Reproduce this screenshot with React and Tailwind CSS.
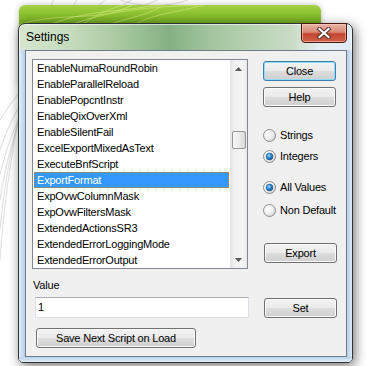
import React from "react";

const items = [
  "EnableNumaRoundRobin",
  "EnableParallelReload",
  "EnablePopcntInstr",
  "EnableQixOverXml",
  "EnableSilentFail",
  "ExcelExportMixedAsText",
  "ExecuteBnfScript",
  "ExportFormat",
  "ExpOvwColumnMask",
  "ExpOvwFiltersMask",
  "ExtendedActionsSR3",
  "ExtendedErrorLoggingMode",
  "ExtendedErrorOutput",
];

const Button = ({ children, className = "", isDefault }) => (
  <button
    className={
      "flex items-center justify-center rounded-[3px] border text-black bg-[linear-gradient(180deg,#f2f2f2_0%,#ebebeb_50%,#dddddd_51%,#cfcfcf_100%)] " +
      (isDefault
        ? "border-[#3c7fb1] shadow-[inset_0_0_0_1px_#8fdcf8] "
        : "border-[#707070] shadow-[inset_0_0_0_1px_#fbfbfb] ") +
      className
    }
  >
    {children}
  </button>
);

const Radio = ({ checked, label, className = "" }) => (
  <div className={"flex h-4 items-center " + className}>
    <svg width="13" height="13" viewBox="0 0 13 13" className="shrink-0">
      <defs>
        <radialGradient id="radioBg" cx="0.35" cy="0.35" r="0.75">
          <stop offset="0" stopColor="#ffffff" />
          <stop offset="0.6" stopColor="#ececec" />
          <stop offset="1" stopColor="#c9c9c9" />
        </radialGradient>
        <radialGradient id="radioDot" cx="0.4" cy="0.35" r="0.7">
          <stop offset="0" stopColor="#9fd8ff" />
          <stop offset="0.5" stopColor="#2d8ad1" />
          <stop offset="1" stopColor="#0b4c84" />
        </radialGradient>
      </defs>
      <circle cx="6.5" cy="6.5" r="6" fill="url(#radioBg)" stroke="#8e8f8f" />
      {checked && (
        <circle cx="6.5" cy="6.5" r="3.4" fill="url(#radioDot)" stroke="#1c5a8e" strokeWidth="0.6" />
      )}
    </svg>
    <span className="ml-[4px] leading-none">{label}</span>
  </div>
);

const Arrow = ({ down }) => (
  <svg width="7" height="4" viewBox="0 0 7 4">
    <path d={down ? "M0 0h7L3.5 4z" : "M0 4h7L3.5 0z"} fill="#5a5a5a" />
  </svg>
);

export default function App() {
  return (
    <div
      className="relative h-[366px] w-[383px] overflow-hidden bg-white text-[11px] tracking-[-0.2px] text-black"
      style={{ fontFamily: '"Liberation Sans", Arial, sans-serif' }}
    >
      {/* desktop wallpaper swirls */}
      <svg className="absolute left-0 top-0" width="383" height="366" viewBox="0 0 383 366">
        <g fill="none" stroke="#d4d4d4" strokeWidth="0.8">
          <path d="M0 150 C20 90 60 40 140 -5" />
          <path d="M0 175 C15 110 50 50 110 -5" />
          <path d="M0 200 C10 130 40 60 80 -5" />
          <path d="M0 230 C6 160 25 80 55 -5" />
          <path d="M0 120 C30 70 80 30 170 -5" />
          <path d="M120 0 C150 10 180 5 200 -5" />
          <path d="M0 260 C4 200 15 120 35 50" />
        </g>
      </svg>

      {/* green window behind */}
      <div className="absolute left-[19px] top-[5px] h-[80px] w-[302px] overflow-hidden rounded-t-[6px] bg-[linear-gradient(180deg,#a4d148_0px,#8cc230_9px,#6ea61f_20px,#6aa21d_80px)] shadow-[0_0_6px_rgba(0,0,0,0.25)]">
        <svg width="302" height="80" viewBox="0 0 302 80">
          <g fill="none" stroke="#e6f28c" strokeOpacity="0.6" strokeWidth="0.8">
            <path d="M10 30 C60 0 110 10 160 -5" />
            <path d="M30 30 C70 8 120 2 180 0" />
            <path d="M50 30 C80 5 100 -2 140 -5" />
            <path d="M70 30 C100 10 130 15 150 -5" />
            <path d="M0 20 C40 5 90 20 120 -5" />
            <path d="M100 30 C130 5 160 10 200 -5" />
          </g>
        </svg>
      </div>

      {/* Settings dialog */}
      <div className="absolute left-[18px] top-[23px] flex h-[340px] w-[335px] flex-col rounded-t-[7px] rounded-b-[5px] border border-[#2e3438] bg-[linear-gradient(90deg,#d6e6cf_0%,#c6dcbe_15%,#a9c9a1_30%,#84b184_45%,#a3c59f_58%,#b4d0af_68%,#c9dcc6_82%,#e6eff3_90%,#dfeaf5_100%)] shadow-[2px_3px_12px_rgba(0,0,0,0.55),inset_0_0_0_1px_rgba(255,255,255,0.6)]">
        {/* close button */}
        <div className="absolute right-[5px] top-[-1px] flex h-[20px] w-[46px] items-center justify-center rounded-b-[4px] border border-[#4a1a12] bg-[linear-gradient(180deg,#eab3a5_0%,#d98a78_45%,#c4442e_55%,#d0634a_100%)] shadow-[inset_0_0_0_1px_rgba(255,210,200,0.55)]">
          <svg width="14" height="12" viewBox="0 0 14 12">
            <path d="M2.5 2 L11.5 10 M11.5 2 L2.5 10" stroke="#4a2a26" strokeWidth="4" strokeLinecap="square" />
            <path d="M2.5 2 L11.5 10 M11.5 2 L2.5 10" stroke="#ffffff" strokeWidth="2.2" strokeLinecap="square" />
          </svg>
        </div>

        {/* title bar */}
        <div className="flex h-[26px] shrink-0 items-center pl-[7px] text-[12px] tracking-normal text-black">
          Settings
        </div>

        <div className="flex min-h-0 flex-1 bg-[linear-gradient(180deg,#c7dcef,#b9d3ec)]">
          <div className="w-[6px] shrink-0 bg-[linear-gradient(90deg,#e4eef8,#b4cfea)]" />

          {/* client area */}
          <div className="flex w-[322px] shrink-0 flex-col border border-[#6f7d8b] bg-[#f0f0f0] pl-[6px] pt-[8px]">
            <div className="flex">
              {/* list box */}
              <div className="flex h-[210px] w-[216px] shrink-0 border border-[#828790] bg-white">
                <div className="flex-1 overflow-hidden p-[1px] pt-0">
                  {items.map((it) => (
                    <div
                      key={it}
                      className={
                        "flex h-4 items-center pl-[2px] leading-none " +
                        (it === "ExportFormat"
                          ? "border border-dotted border-[#e07a1f] bg-[#3399ff] text-white"
                          : "border border-transparent")
                      }
                    >
                      {it}
                    </div>
                  ))}
                </div>
                {/* scrollbar */}
                <div className="flex w-[17px] shrink-0 flex-col items-center bg-[linear-gradient(90deg,#e2e2e2,#f1f1f1_25%,#f5f5f5_75%,#e9e9e9)]">
                  <div className="flex h-[17px] items-center justify-center">
                    <Arrow />
                  </div>
                  <div className="mt-[54px] h-[18px] w-[14px] rounded-[2px] border border-[#979797] bg-[linear-gradient(90deg,#f7f7f7,#ececec_50%,#d8d8d8)]" />
                  <div className="mt-auto flex h-[17px] items-center justify-center">
                    <Arrow down />
                  </div>
                </div>
              </div>

              {/* right column */}
              <div className="ml-[15px] flex w-[74px] flex-col">
                <Button isDefault className="mt-[2px] h-[20px] w-[73px]">Close</Button>
                <Button className="mt-[6px] h-[20px] w-[73px]">Help</Button>
                <Radio label="Strings" className="mt-[20px]" />
                <Radio checked label="Integers" className="mt-[5px]" />
                <Radio checked label="All Values" className="mt-[15px]" />
                <Radio label="Non Default" className="mt-[7px]" />
                <Button className="ml-[1px] mt-[25px] h-[20px] w-[73px]">Export</Button>
              </div>
            </div>

            <div className="ml-[1px] mt-[10px] h-[13px] leading-[13px]">Value</div>
            <div className="mt-[5px] flex items-start">
              <div className="ml-[3px] flex h-[21px] w-[214px] items-center border border-[#dbdfe6] border-t-[#abadb3] bg-white pl-[2px]">
                1
              </div>
              <Button className="ml-[15px] mt-[1px] h-[20px] w-[73px]">Set</Button>
            </div>
            <Button className="ml-[4px] mt-[10px] h-[20px] w-[160px]">Save Next Script on Load</Button>
          </div>

          <div className="w-[5px] shrink-0 bg-[linear-gradient(90deg,#b4cfea,#dfeaf6)]" />
        </div>
        <div className="h-[5px] shrink-0 rounded-b-[4px] bg-[linear-gradient(180deg,#b9d3ec,#e2edf8)]" />
      </div>
    </div>
  );
}
